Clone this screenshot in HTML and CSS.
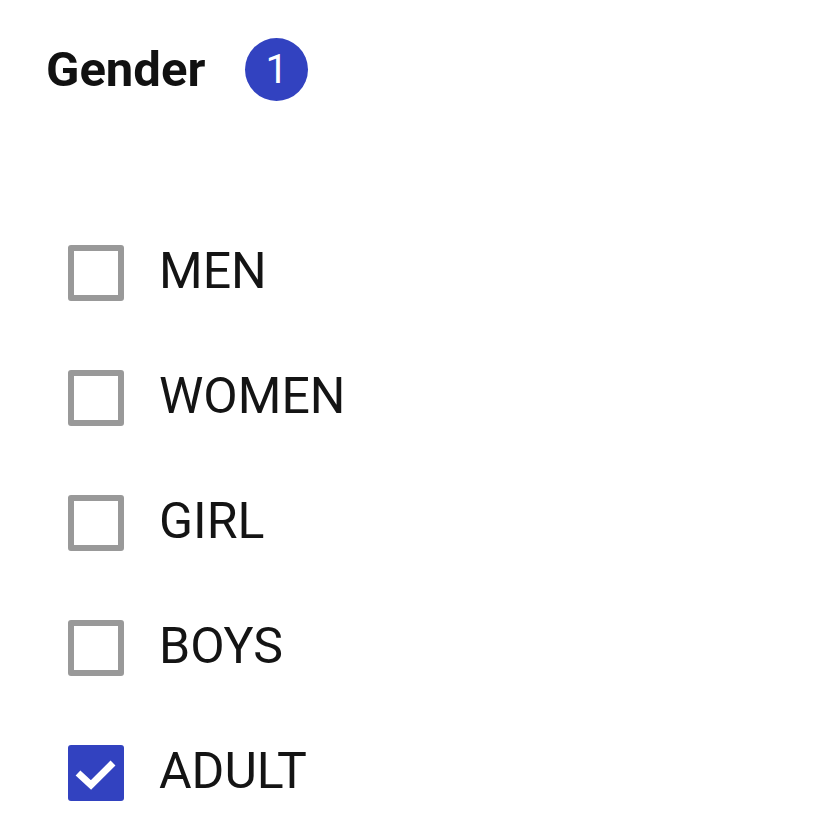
FILE: index.html
```html
<!DOCTYPE html>
<html>
<head>
<meta charset="utf-8">
<link rel="stylesheet" href="styles.css">
</head>
<body>
<div class="page">
  <div class="header">
    <span class="title">Gender</span>
    <span class="badge">1</span>
  </div>
  <ul class="options">
    <li class="option"><span class="box"></span><span class="label">MEN</span></li>
    <li class="option"><span class="box"></span><span class="label">WOMEN</span></li>
    <li class="option"><span class="box"></span><span class="label">GIRL</span></li>
    <li class="option"><span class="box"></span><span class="label">BOYS</span></li>
    <li class="option"><span class="box checked"><svg viewBox="0 0 56 56" width="56" height="56"><path d="M10 28 L23 40 L45 18" fill="none" stroke="#fff" stroke-width="7" stroke-linecap="butt" stroke-linejoin="miter"/></svg></span><span class="label">ADULT</span></li>
  </ul>
</div>
</body>
</html>
```
FILE: styles.css
```css
html, body {
  margin: 0;
  padding: 0;
  background: #fff;
}
body {
  font-family: Roboto, "Noto Sans", sans-serif;
  color: #161616;
}
.page {
  width: 835px;
  height: 835px;
  overflow: hidden;
}
.header {
  display: flex;
  align-items: center;
  margin-top: 38px;
  margin-left: 46px;
  height: 63px;
}
.title {
  font-size: 49px;
  font-weight: 700;
  line-height: 1;
  color: #111;
}
.badge {
  margin-left: 40px;
  width: 63px;
  height: 63px;
  border-radius: 50%;
  background: #3242c0;
  color: #fff;
  font-size: 40px;
  font-weight: 400;
  display: flex;
  align-items: center;
  justify-content: center;
  line-height: 1;
}
.options {
  list-style: none;
  margin: 109px 0 0 68px;
  padding: 0;
}
.option {
  display: flex;
  align-items: center;
  height: 125px;
}
.box {
  box-sizing: border-box;
  width: 56px;
  height: 56px;
  border: 6px solid #999;
  border-radius: 3px;
  flex: none;
}
.box.checked {
  border: none;
  background: #3242c0;
  display: flex;
}
.label {
  margin-left: 35px;
  margin-bottom: 3px;
  font-size: 50px;
  line-height: 1;
  color: #141414;
}
```
